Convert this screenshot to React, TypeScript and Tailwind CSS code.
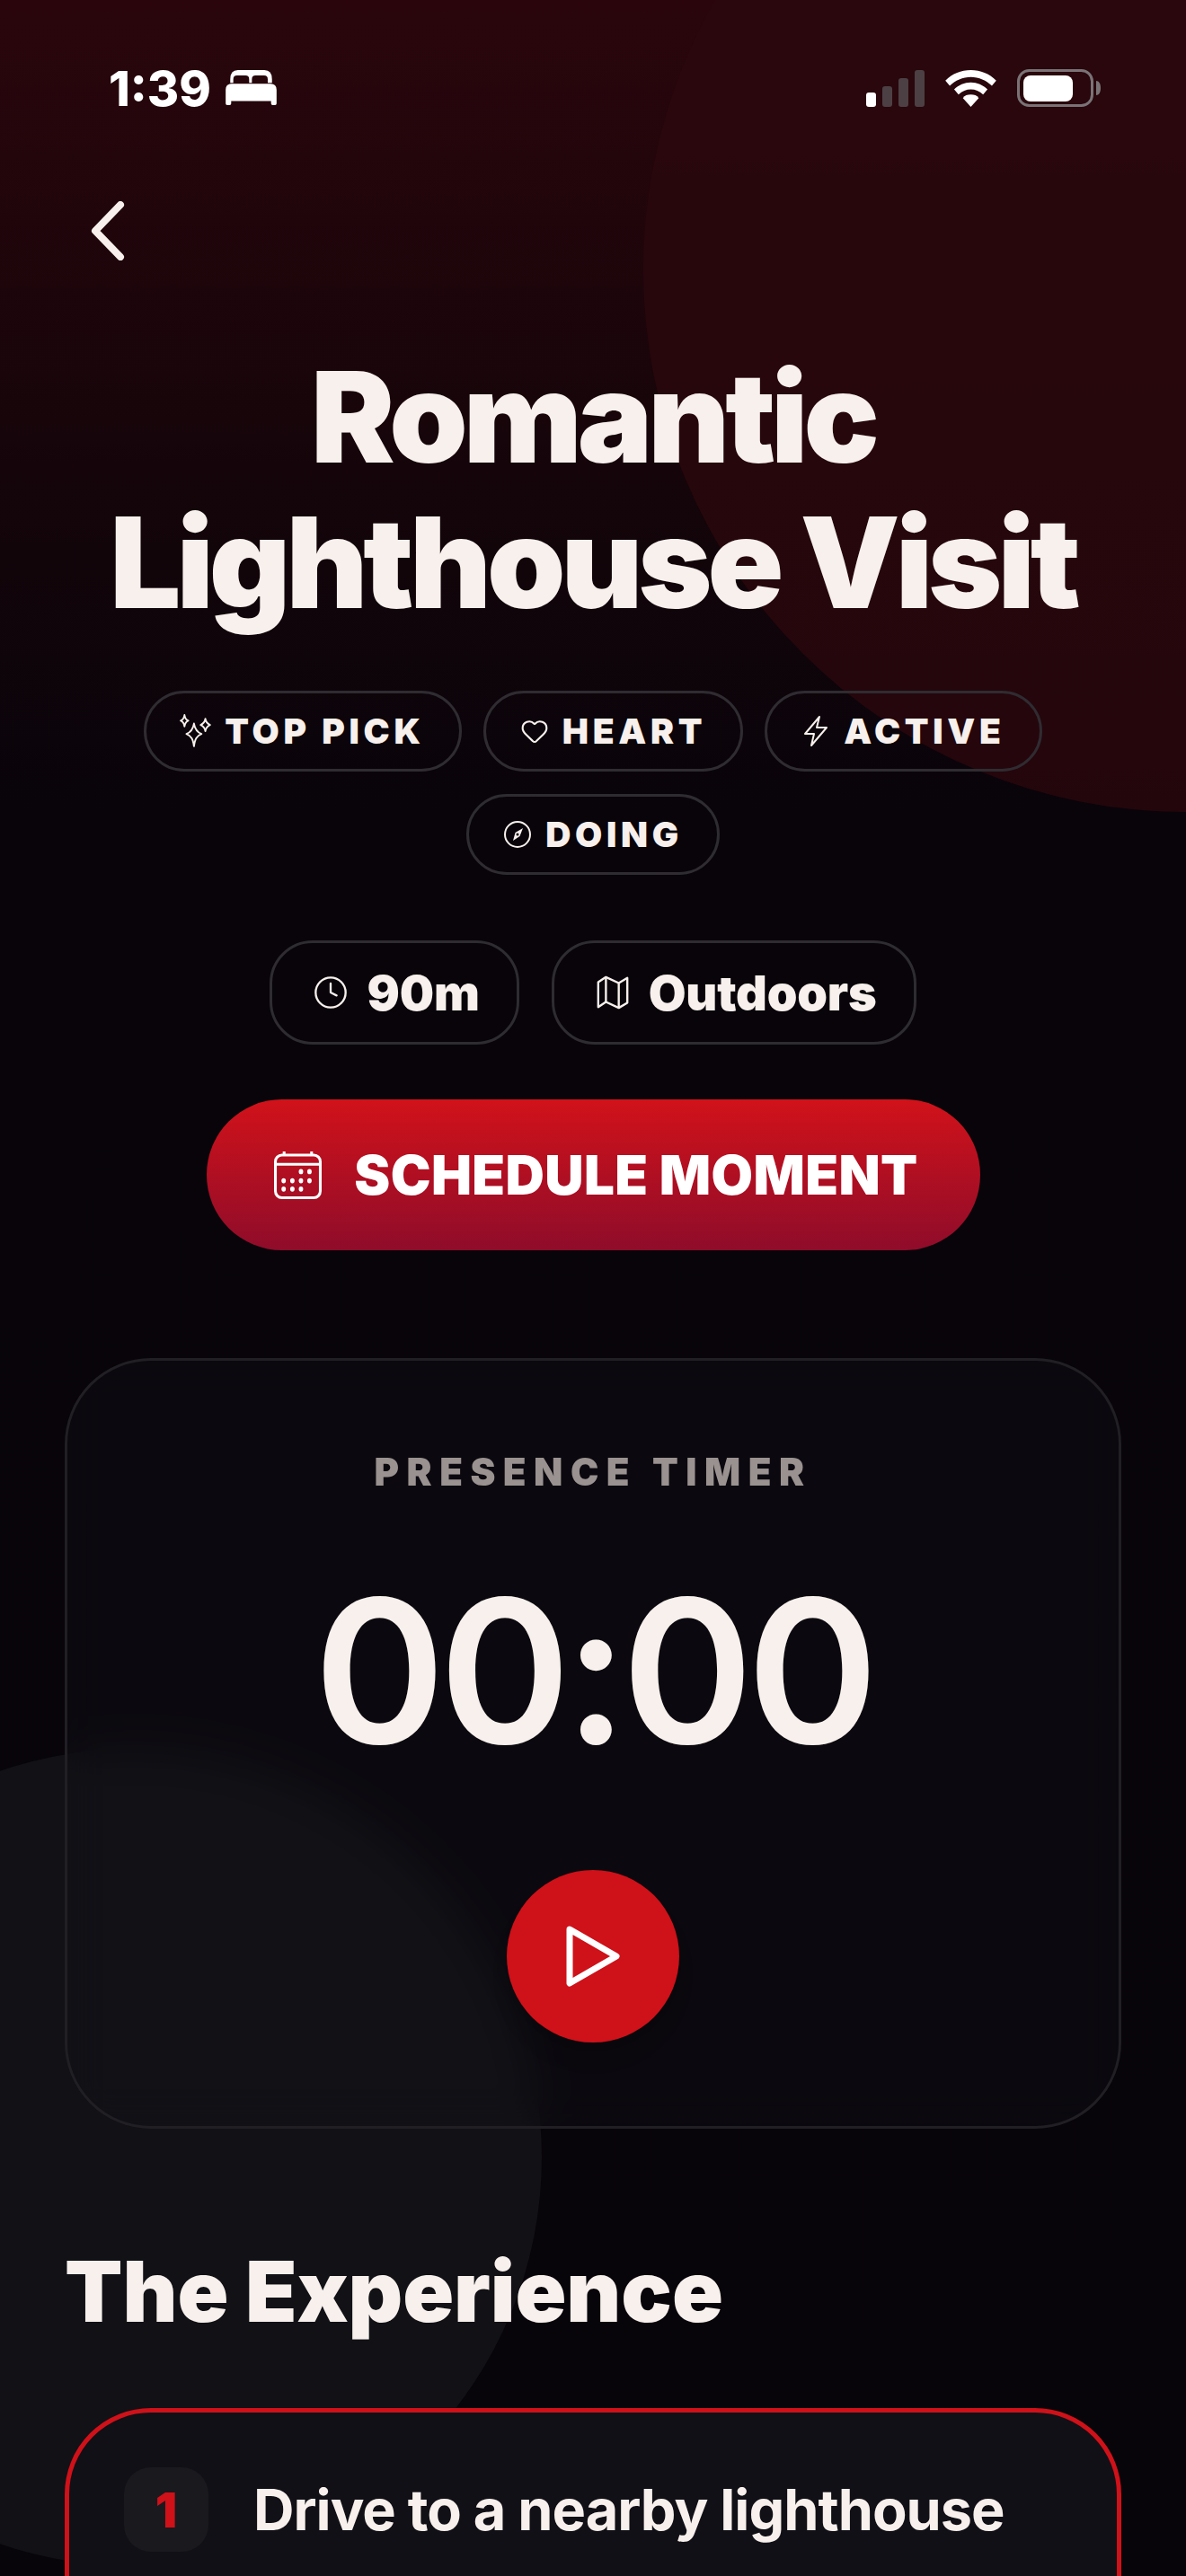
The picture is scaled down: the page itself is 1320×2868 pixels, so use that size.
import { Heart, Clock } from 'lucide-react';

const SparklesIcon = () => (
  <svg width="38" height="38" viewBox="0 0 36 36" fill="none" stroke="currentColor" strokeWidth="1.8" strokeLinejoin="round">
    <path d="M16 10c1 6 3 9 8 11-5 2-7 5-8 13-1-8-3-11-8-13 5-2 7-5 8-11z" />
    <path d="M6 1c.5 3 1.500 5 4 6-2.500 1-3.500 3-4 6-.5-3-1.500-5-4-6 2.500-1 3.500-3 4-6z" />
    <path d="M28 5c.5 3 1.500 5 5 6.500-3.500 1.500-4.500 3.500-5 6.500-.5-3-1.500-5-5-6.500 3.500-1.500 4.500-3.500 5-6.500z" />
  </svg>
);

const HeartIcon = () => (
  <span className="w-[36px] flex justify-center"><Heart size={32} strokeWidth={1.6} /></span>
);

const BoltIcon = ({ size }: any) => (
  <svg width={size} height={size} viewBox="0 0 36 36" fill="none" stroke="currentColor" strokeWidth="2" strokeLinejoin="round">
    <path d="M22 2 6 21h10l-3 13 17-20H19z" />
  </svg>
);

const CompassIcon = ({ size }: any) => (
  <svg width={size} height={size} viewBox="0 0 36 36" fill="none" stroke="currentColor" strokeWidth="2">
    <circle cx="18" cy="18" r="14" />
    <path d="M24 11 20.500 20 13 25l2.500-9z" fill="currentColor" stroke="none" />
    <circle cx="18" cy="18" r="1.500" fill="#08040a" stroke="none" />
  </svg>
);

const ClockIcon = ({ size }: any) => <Clock size={size} strokeWidth={1.4} />;

const MapIcon = ({ size }: any) => (
  <svg width={size} height={size} viewBox="0 0 42 42" fill="none" stroke="currentColor" strokeWidth="2.500" strokeLinejoin="round">
    <path d="M4 9 13 3l15 7 10-6v29l-10 6-15-7-9 6z" />
    <path d="M13 3v30M28 10v29" />
  </svg>
);

const CalendarIcon = () => (
  <svg width="53" height="53" viewBox="0 0 52 52" fill="none" stroke="white" strokeWidth="3">
    <rect x="1.500" y="4" width="49" height="46.500" rx="7" />
    <path d="M2 14h48M11 0v5M41 0v5" />
    <g fill="white" stroke="none">
      <ellipse cx="29.400" cy="22" rx="2.400" ry="2.800" />
      <ellipse cx="38.700" cy="22" rx="2.400" ry="2.800" />
      <ellipse cx="10.500" cy="32" rx="2.400" ry="2.800" />
      <ellipse cx="20" cy="32" rx="2.400" ry="2.800" />
      <ellipse cx="29.400" cy="32" rx="2.400" ry="2.800" />
      <ellipse cx="38.700" cy="32" rx="2.400" ry="2.800" />
      <ellipse cx="10.500" cy="41" rx="2.400" ry="2.800" />
      <ellipse cx="20" cy="41" rx="2.400" ry="2.800" />
      <ellipse cx="29.400" cy="41" rx="2.400" ry="2.800" />
    </g>
  </svg>
);

const Tag = ({ icon: Icon, label }: any) => (
  <div className="h-[90px] pl-[36px] pr-[38px] rounded-full border-[3px] border-[#2f2c31] flex items-center gap-[13px] text-[39px] font-black tracking-[4.700px] text-[#f7f0ec]">
    <Icon size={36} />
    <span>{label}</span>
  </div>
);

const Meta = ({ icon: Icon, label }: any) => (
  <div className="h-[116px] pl-[45px] pr-[41px] rounded-[48px] border-[3px] border-[#2f2c31] flex items-center gap-[20px] text-[54px] font-black tracking-[-0.2px] text-[#f7f0ec]">
    <Icon size={40} />
    <span>{label}</span>
  </div>
);

const StatusBar = () => (
  <div className="h-[120px] pt-[74px] pl-[121px] pr-[95px] flex justify-between items-start">
    <div className="flex items-center gap-[16px] h-[48px]">
      <span className="text-[54px] font-extrabold text-white tracking-[0px]">1:39</span>
      <svg width="57" height="39" viewBox="0 0 167 115" fill="white" className="mt-[-1px]">
        <path d="M15 30q0-30 25-30h87q25 0 25 30v12h-14V30q0-12-12-12h-28q-12 0-12 12v12h-9V30q0-12-12-12H37q-12 0-12 12v12H15z" />
        <path d="M20 45h127q20 0 20 20v45q0 5-5 5h-8q-5 0-5-5v-8H18v8q0 5-5 5H5q-5 0-5-5V65q0-20 20-20z" />
      </svg>
    </div>
    <div className="flex items-center gap-[23px] h-[48px]">
      <svg width="65" height="41" viewBox="0 0 65 41">
        <rect x="0" y="25" width="11" height="16" rx="3" fill="white" />
        <rect x="18" y="18" width="11" height="23" rx="3" fill="#4c4044" />
        <rect x="36" y="9" width="11" height="32" rx="3" fill="#4c4044" />
        <rect x="54" y="0" width="11" height="41" rx="3" fill="#4c4044" />
      </svg>
      <svg width="57" height="41" viewBox="0 0 58 42" fill="white">
        <path d="M29 0c11 0 21 4 29 12l-5 6c-6-6-15-10-24-10S11 12 5 18l-5-6C8 4 18 0 29 0z" />
        <path d="M29 14c7 0 14 3 19 8l-5 6c-4-4-9-6-14-6s-10 2-14 6l-5-6c5-5 12-8 19-8z" />
        <path d="M29 28c4 0 7 1 9 4l-9 10-9-10c2-3 5-4 9-4z" />
      </svg>
      <svg width="93" height="42" viewBox="0 0 93 42">
        <rect x="1.500" y="1.500" width="82" height="39" rx="12" fill="none" stroke="#7a7376" strokeWidth="3" />
        <rect x="7" y="7" width="55" height="29" rx="8" fill="white" />
        <path d="M88 13c3 0 5 3 5 8s-2 8-5 8z" fill="#7a7376" />
      </svg>
    </div>
  </div>
);

export default function App() {
  return (
    <div className="relative w-[1320px] h-[2868px] overflow-hidden bg-[linear-gradient(180deg,#2a060c_0%,#15050a_18%,#08040a_32%,#07040a_100%)] font-['Inter',sans-serif]">
      {/* decorative circles */}
      <div className="absolute left-[716px] top-[-304px] w-[1208px] h-[1208px] rounded-full bg-[#2a070c]/80" />
      <div className="absolute left-[-307px] top-[1947px] w-[910px] h-[910px] rounded-full bg-[#111116]" />

      <div className="relative">
        <StatusBar />

        <div className="pl-[100px] pt-[104px] h-[200px]">
          <svg width="40" height="66" viewBox="0 0 40 66" fill="none" stroke="#f7f0ec" strokeWidth="8" strokeLinecap="round" strokeLinejoin="round">
            <path d="M34 4 6 33l28 29" />
          </svg>
        </div>

        <h1 className="mt-[63px] mb-[62px] text-center text-[140px] leading-[162px] font-black tracking-[-5px] text-[#f7f0ec]">
          Romantic<br />Lighthouse Visit
        </h1>

        <div className="px-[72px] flex flex-wrap justify-center gap-x-[24px] gap-y-[25px]">
          <Tag icon={SparklesIcon} label="TOP PICK" />
          <Tag icon={HeartIcon} label="HEART" />
          <Tag icon={BoltIcon} label="ACTIVE" />
          <Tag icon={CompassIcon} label="DOING" />
        </div>

        <div className="mt-[73px] flex justify-center gap-[36px]">
          <Meta icon={ClockIcon} label="90m" />
          <Meta icon={MapIcon} label="Outdoors" />
        </div>

        <div className="mt-[61px] flex justify-center">
          <button className="w-[861px] h-[168px] pl-[7px] rounded-full bg-[linear-gradient(180deg,#d1121a,#8f0c2a)] flex items-center justify-center gap-[36px] text-white text-[60px] font-black tracking-[0.400px]">
            <CalendarIcon />
            <span>SCHEDULE MOMENT</span>
          </button>
        </div>

        <div className="mt-[120px] mx-[72px] h-[858px] rounded-[96px] border-[3px] border-[#211f24] bg-[#111116]/40 backdrop-blur-xl flex flex-col items-center">
          <div className="mt-[99px] text-[42px] leading-[50px] font-black tracking-[8.500px] text-[#9a9290]">PRESENCE TIMER</div>
          <div className="mt-[67px] text-[222px] leading-[260px] font-semibold tracking-[-7px] text-[#f7f0ec]">00:00</div>
          <button className="mt-[91px] w-[192px] h-[192px] rounded-full bg-[#cf1119] flex items-center justify-center shadow-xl">
            <svg width="60" height="68" viewBox="0 0 60 68" fill="none" stroke="white" strokeWidth="7" strokeLinejoin="round">
              <path d="M4 4 56 34 4 64z" />
            </svg>
          </button>
        </div>

        <h2 className="mt-[123px] mx-[72px] text-[94px] leading-[116px] font-black tracking-[-0.100px] text-[#f7f0ec]">The Experience</h2>

        <div className="mt-[72px] mx-[72px] h-[300px] rounded-[96px] border-[5px] border-[#cf1119] bg-[#111016] flex items-start pt-[61px] pl-[61px] gap-[50px]">
          <div className="w-[94px] h-[94px] rounded-[30px] bg-[#1a191e] flex items-center justify-center text-[#cf1119] text-[54px] font-black">1</div>
          <div className="text-[63px] leading-[94px] font-bold tracking-[-1px] text-[#f7f0ec]">Drive to a nearby lighthouse</div>
        </div>
      </div>
    </div>
  );
}
